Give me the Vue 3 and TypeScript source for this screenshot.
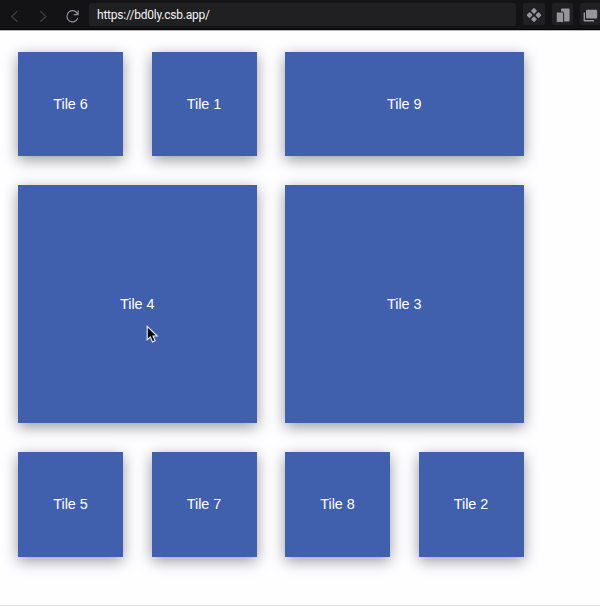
<script setup lang="ts">
interface Tile {
  id: number
  cols: number
  rows: number
}

const url = 'https://bd0ly.csb.app/'

const tiles: Tile[] = [
  { id: 6, cols: 1, rows: 1 },
  { id: 1, cols: 1, rows: 1 },
  { id: 9, cols: 2, rows: 1 },
  { id: 4, cols: 2, rows: 2 },
  { id: 3, cols: 2, rows: 2 },
  { id: 5, cols: 1, rows: 1 },
  { id: 7, cols: 1, rows: 1 },
  { id: 8, cols: 1, rows: 1 },
  { id: 2, cols: 1, rows: 1 },
]
</script>

<template>
  <div class="browser">
    <header class="toolbar">
      <nav class="nav">
        <button class="nav-button" aria-label="Back">
          <svg width="16" height="16" viewBox="0 0 16 16"><path d="M10.3 3.1 4.8 8.4l5.5 5.3" /></svg>
        </button>
        <button class="nav-button" aria-label="Forward">
          <svg width="16" height="16" viewBox="0 0 16 16"><path d="M4.3 3.1 9.8 8.4l-5.5 5.3" /></svg>
        </button>
        <button class="nav-button reload" aria-label="Reload">
          <svg width="16" height="16" viewBox="0 0 16 16">
            <path d="M13.1 2.4v4.3H8.6M12.8 6.4A5.6 5.6 0 1 0 12.8 10.1" />
          </svg>
        </button>
      </nav>
      <div class="address">{{ url }}</div>
      <div class="actions">
        <button class="action" aria-label="Components">
          <svg width="21" height="22" viewBox="0 0 21 22">
            <path class="round" d="m11 5.9 2 2-2 2-2-2zM6.6 10.1l2 2-2 2-2-2zM15.4 10.1l2 2-2 2-2-2zM11 14.3l2 2-2 2-2-2z" />
          </svg>
        </button>
        <button class="action" aria-label="Responsive preview">
          <svg width="22" height="22" viewBox="0 0 22 22">
            <rect x="9" y="5.6" width="8.6" height="12.8" rx="0.8" />
            <rect class="front" x="4.2" y="9" width="7.4" height="10.4" rx="1" />
          </svg>
        </button>
        <button class="action" aria-label="Open in new window">
          <svg width="22" height="22" viewBox="0 0 22 22">
            <path d="M3.6 9.6H5v7.4h9v1.5H4.4a.8.8 0 0 1-.8-.8z" />
            <rect x="6" y="6.8" width="11.2" height="8.8" rx="1" />
          </svg>
        </button>
      </div>
    </header>
    <main class="page">
      <div class="grid">
        <div
          v-for="tile in tiles"
          :key="tile.id"
          class="tile"
          :class="{ wide: tile.cols === 2, tall: tile.rows === 2 }"
        >
          Tile {{ tile.id }}
          <svg v-if="tile.id === 4" class="cursor" width="13" height="20" viewBox="0 0 13 20">
            <path d="M1.2 1.3v13.5l3.1-2.8 2.2 5 2.6-1.2-2.1-4.8h4.2z" />
          </svg>
        </div>
      </div>
    </main>
  </div>
</template>

<style>
body {
  margin: 0;
}
</style>

<style scoped>
.browser {
  box-sizing: border-box;
  width: 600px;
  height: 606px;
  overflow: hidden;
  display: flex;
  flex-direction: column;
  background: #fefdff;
  border-bottom: 1px solid #ececee;
}

.toolbar {
  box-sizing: border-box;
  flex: none;
  display: flex;
  align-items: flex-start;
  width: 606px;
  height: 30px;
  padding: 3px 0 0 7px;
  background: #131215;
  border-bottom: 1px solid #050506;
}

.nav {
  display: flex;
  gap: 13px;
  width: 82px;
  padding-top: 4px;
}

button {
  display: block;
  flex: none;
  padding: 0;
  border: 0;
  background: none;
}

svg {
  display: block;
}

.nav-button {
  width: 16px;
  height: 17px;
}

.nav-button path {
  fill: none;
  stroke: #47464a;
  stroke-width: 1.1;
}

.nav-button.reload path {
  stroke: #949397;
  stroke-width: 1.2;
}

.address {
  box-sizing: border-box;
  flex: none;
  width: 427px;
  height: 23px;
  padding-left: 8px;
  border-radius: 2px;
  background: #201f22;
  color: #f3f3f4;
  font: 12px/24px Roboto, sans-serif;
  letter-spacing: -0.22px;
}

.actions {
  display: flex;
  gap: 7px;
  padding-left: 7px;
}

.action {
  width: 21.5px;
  height: 22px;
  border-radius: 2px;
  background: #201f22;
  fill: #96969a;
}

.action .front {
  stroke: #201f22;
  stroke-width: 1;
}

.action .round {
  stroke: #96969a;
  stroke-width: 1.5;
  stroke-linejoin: round;
}

.page {
  flex: 1;
  border-top: 1px solid #b9b8ba;
  padding: 20.5px 0 0 18px;
}

.grid {
  display: grid;
  grid-template-columns: repeat(4, 105px);
  grid-auto-rows: 104.9px;
  gap: 28.5px;
}

.tile {
  position: relative;
  display: flex;
  align-items: center;
  justify-content: center;
  background: #4060ae;
  color: #fff;
  font: 14.4px/18px "Liberation Sans", Arial, sans-serif;
  box-shadow: 0 4px 14px rgba(0, 0, 0, 0.4);
}

.wide {
  grid-column: span 2;
}

.tall {
  grid-row: span 2;
}

.cursor {
  position: absolute;
  left: 128px;
  top: 140px;
}

.cursor path {
  fill: #08080c;
  stroke: #e8ebf5;
  stroke-width: 1.1;
}
</style>
